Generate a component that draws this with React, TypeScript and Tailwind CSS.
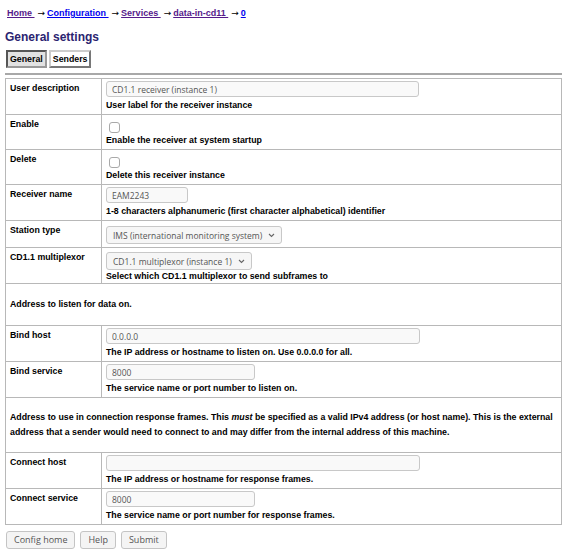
import type { ReactNode } from "react";

const label = "align-top border border-[#b8b8b8] px-[4px] py-[4px] text-left font-bold w-[96px]";
const cell = "align-top border border-[#b8b8b8] px-[4px] pt-[2px] pb-[3px]";
const input =
  "block h-[16px] rounded-[3px] border border-[#c8c8c8] bg-[#f9f9f9] px-[5px] text-[8.5px] text-[#555] font-['Open_Sans',sans-serif] outline-none";
const help = "mt-[3px] leading-[11px] font-bold";

function Row({ name, children }: { name: string; children: ReactNode }) {
  return (
    <tr>
      <th className={label}>{name}</th>
      <td className={cell}>{children}</td>
    </tr>
  );
}

function Check() {
  return (
    <span className="ml-[3px] mt-[5px] block size-[11px] rounded-[3px] border border-[#a9a9a9] bg-white" />
  );
}

function Select({ text, className }: { text: string; className: string }) {
  return (
    <span
      className={`${className} flex h-[18px] w-fit items-center gap-[6px] rounded-[3px] border border-[#c8c8c8] bg-[#f6f6f6] px-[6px] text-[8.5px] text-[#555] font-['Open_Sans',sans-serif]`}
    >
      {text}
      <svg width="7" height="5" viewBox="0 0 7 5" className="text-[#666]">
        <path d="M1 1l2.5 2.5L6 1" fill="none" stroke="currentColor" strokeWidth="1.1" />
      </svg>
    </span>
  );
}

function Button({ children }: { children: ReactNode }) {
  return (
    <button
      type="button"
      className="h-[18px] rounded-[3px] border border-[#c4c4c4] bg-[#f4f4f4] px-[7px] text-[9px] text-[#555] font-['Open_Sans',sans-serif]"
    >
      {children}
    </button>
  );
}

function Arrow() {
  return <span className="pl-[3px] pr-[2px] text-[9px] font-normal font-['DejaVu_Sans',sans-serif]">→</span>;
}

export default function App() {
  return (
    <div className="min-h-[550px] bg-white px-[5px] pt-[6px] text-[8.8px] text-black font-['Liberation_Sans',Arial,sans-serif]">
      <div className="pl-[2px] text-[9px] font-bold leading-[14px]">
        <a href="#" className="text-[#551a8b] underline">Home </a>
        <Arrow />
        <a href="#" className="text-[#0000ee] underline">Configuration </a>
        <Arrow />
        <a href="#" className="text-[#551a8b] underline">Services </a>
        <Arrow />
        <a href="#" className="text-[#551a8b] underline">data-in-cd11 </a>
        <Arrow />
        <a href="#" className="text-[#0000ee] underline">0</a>
      </div>

      <h1 className="mt-[9px] text-[12px] font-bold leading-[16px] text-[#2b2470]">General settings</h1>

      <div className="mt-[5px] flex gap-[2px] pl-[1px]">
        <span className="border-2 border-t-[#555] border-l-[#555] border-b-[#999] border-r-[#999] bg-[#e2e2e2] px-[2px] py-[1px] font-bold leading-[12px]">
          General
        </span>
        <span className="border-2 border-t-[#ccc] border-l-[#ccc] border-b-[#777] border-r-[#777] bg-white px-[2px] py-[1px] font-bold leading-[12px]">
          Senders
        </span>
      </div>

      <div className="mt-[5px] border-t-[2px] border-[#a8a8a8]" />

      <table className="mt-[3px] w-full border-collapse border border-[#b8b8b8] leading-[11px]">
        <tbody>
          <Row name="User description">
            <input readOnly className={`${input} w-[313px]`} defaultValue="CD1.1 receiver (instance 1)" />
            <div className={help}>User label for the receiver instance</div>
          </Row>
          <Row name="Enable">
            <Check />
            <div className="mt-[2px] leading-[11px] font-bold">Enable the receiver at system startup</div>
          </Row>
          <Row name="Delete">
            <Check />
            <div className="mt-[2px] leading-[11px] font-bold">Delete this receiver instance</div>
          </Row>
          <Row name="Receiver name">
            <input readOnly className={`${input} w-[82px]`} defaultValue="EAM2243" />
            <div className={help}>1-8 characters alphanumeric (first character alphabetical) identifier</div>
          </Row>
          <tr>
            <th className={label}>Station type</th>
            <td className="align-top border border-[#b8b8b8] px-[4px] pt-[2px] pb-[2px]">
              <Select className="mt-[3px] mb-[1px]" text="IMS (international monitoring system)" />
            </td>
          </tr>
          <tr>
            <th className={label}>CD1.1 multiplexor</th>
            <td className="align-top border border-[#b8b8b8] px-[4px] pt-[2px] pb-[1px]">
              <Select className="mt-[2px]" text="CD1.1 multiplexor (instance 1)" />
              <div className="mt-[1px] leading-[11px] font-bold">
                Select which CD1.1 multiplexor to send subframes to
              </div>
            </td>
          </tr>
          <tr>
            <td colSpan={2} className="border border-[#b8b8b8] px-[4px] py-[15px] font-bold">
              Address to listen for data on.
            </td>
          </tr>
          <Row name="Bind host">
            <input readOnly className={`${input} w-[314px]`} defaultValue="0.0.0.0" />
            <div className={help}>The IP address or hostname to listen on. Use 0.0.0.0 for all.</div>
          </Row>
          <Row name="Bind service">
            <input readOnly className={`${input} w-[149px]`} defaultValue="8000" />
            <div className={help}>The service name or port number to listen on.</div>
          </Row>
          <tr>
            <td colSpan={2} className="border border-[#b8b8b8] px-[4px] py-[12px] font-bold leading-[15px]">
              Address to use in connection response frames. This <i>must</i> be specified as a valid IPv4 address (or
              host name). This is the external address that a sender would need to connect to and may differ from the
              internal address of this machine.
            </td>
          </tr>
          <Row name="Connect host">
            <input readOnly className={`${input} w-[314px]`} defaultValue="" />
            <div className={help}>The IP address or hostname for response frames.</div>
          </Row>
          <Row name="Connect service">
            <input readOnly className={`${input} w-[149px]`} defaultValue="8000" />
            <div className={help}>The service name or port number for response frames.</div>
          </Row>
        </tbody>
      </table>

      <div className="mt-[6px] flex gap-[5px] pl-[1px]">
        <Button>Config home</Button>
        <Button>Help</Button>
        <Button>Submit</Button>
      </div>
    </div>
  );
}
